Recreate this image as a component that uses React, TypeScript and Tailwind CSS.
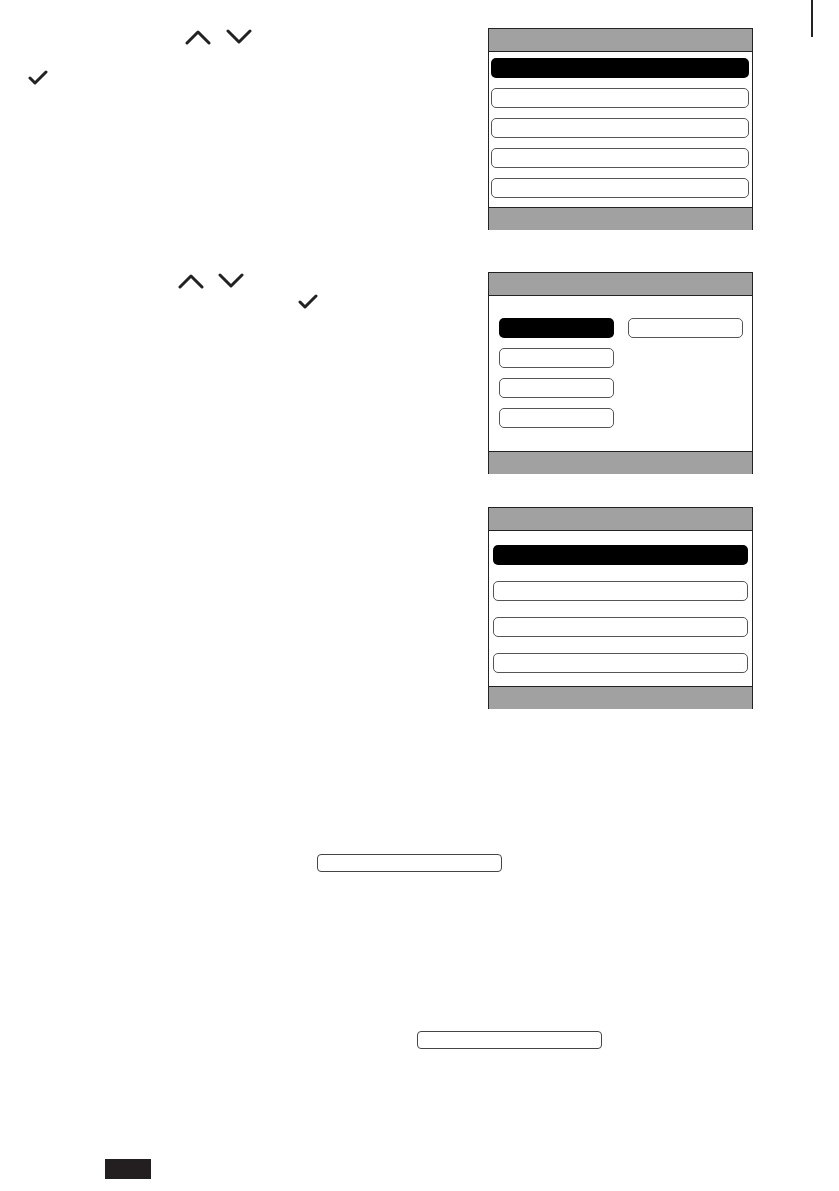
import clsx from 'clsx';

const ChevronUp = () => (
  <svg width="26" height="16" viewBox="0 0 26 16" fill="none">
    <polyline points="2,14 13,3 24,14" stroke="#222" strokeWidth="3" strokeLinecap="round" strokeLinejoin="round" />
  </svg>
);

const ChevronDown = () => (
  <svg width="26" height="16" viewBox="0 0 26 16" fill="none">
    <polyline points="2,2 13,13 24,2" stroke="#222" strokeWidth="3" strokeLinecap="round" strokeLinejoin="round" />
  </svg>
);

const Check = () => (
  <svg width="20" height="16" viewBox="0 0 20 16" fill="none">
    <polyline points="2,8 7,13 18,2" stroke="#222" strokeWidth="3" strokeLinecap="round" strokeLinejoin="round" />
  </svg>
);

interface IPill {
  active?: boolean;
  className?: string;
}

// Tombol layar: hitam kalau terpilih, garis tipis kalau tidak.
const Pill = ({ active, className }: IPill) => (
  <div
    className={clsx(
      'h-[20px] rounded-[5px]',
      active ? 'bg-black' : 'border border-[#555] bg-white',
      className
    )}
  />
);

const Screen = ({ children }: { children: React.ReactNode }) => (
  <div className="w-[265px] h-[202px] border-x border-t border-[#222] flex flex-col shrink-0">
    <div className="h-[23px] bg-[#a1a1a1] border-b border-[#222]" />
    <div className="h-[155px] bg-white">{children}</div>
    <div className="h-[23px] bg-[#a1a1a1] border-t border-[#222]" />
  </div>
);

export default function App() {
  return (
    <div className="w-[839px] h-[1191px] bg-white flex">
      <div className="w-[811px] flex flex-col">
        {/* Bagian 1 */}
        <div className="mt-[28px] flex">
          <div className="w-[488px] flex flex-col">
            <div className="pt-px pl-[185px] flex gap-[15px]">
              <ChevronUp />
              <ChevronDown />
            </div>
            <div className="mt-[25px] pl-[28px]">
              <Check />
            </div>
          </div>
          <Screen>
            <div className="pt-[6px] pl-[2px] pr-[3px] flex flex-col gap-[10px]">
              <Pill active />
              <Pill />
              <Pill />
              <Pill />
              <Pill />
            </div>
          </Screen>
        </div>

        {/* Bagian 2 */}
        <div className="mt-[42px] flex">
          <div className="w-[488px] flex flex-col">
            <div className="pt-px pl-[178px] flex gap-[14px]">
              <ChevronUp />
              <ChevronDown />
            </div>
            <div className="mt-[5px] pl-[298px]">
              <Check />
            </div>
          </div>
          <Screen>
            <div className="pt-[22px] pl-[10px] pr-[9px] grid grid-cols-2 gap-x-[14px] gap-y-[10px]">
              <Pill active />
              <Pill />
              <Pill />
              <div />
              <Pill />
              <div />
              <Pill />
            </div>
          </Screen>
        </div>

        {/* Bagian 3 */}
        <div className="mt-[33px] flex">
          <div className="w-[488px]" />
          <Screen>
            <div className="pt-[14px] pl-[4px] pr-[4px] flex flex-col gap-[16px]">
              <Pill active />
              <Pill />
              <Pill />
              <Pill />
            </div>
          </Screen>
        </div>

        <div className="mt-[145px] pl-[317px]">
          <div className="w-[185px] h-[18px] rounded-[4px] border border-[#444]" />
        </div>

        <div className="mt-[159px] pl-[417px]">
          <div className="w-[185px] h-[18px] rounded-[4px] border border-[#444]" />
        </div>

        <div className="mt-[110px] pl-[105px]">
          <div className="w-[46px] h-[20px] bg-[#231f20]" />
        </div>
      </div>
      <div className="w-[2px] h-[37px] bg-[#222]" />
    </div>
  );
}
